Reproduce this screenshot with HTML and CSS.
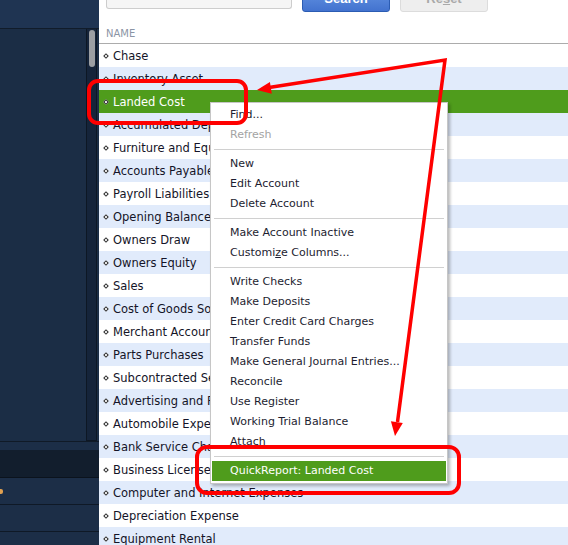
FILE: index.html
```html
<!DOCTYPE html>
<html>
<head>
<meta charset="utf-8">
<link rel="stylesheet" href="styles.css">
</head>
<body>
<div class="page">
  <aside class="side">
    <div class="side-top"></div>
    <div class="side-mid">
      <div class="track"><div class="thumb"></div></div>
    </div>
    <div class="side-band"></div>
    <div class="side-dark"></div>
    <div class="side-row"><span class="tiny-icon"></span></div>
    <div class="side-row"></div>
    <div class="side-row last"></div>
  </aside>
  <main class="main">
    <div class="toolbar">
      <div class="search-box"></div>
      <div class="btn btn-primary">Search</div>
      <div class="btn btn-reset">Re<u>s</u>et</div>
    </div>
    <div class="col-head">NAME</div>
    <div class="list">
      <div class="row"><span class="bullet"></span>Chase</div>
      <div class="row alt"><span class="bullet"></span>Inventory Asset</div>
      <div class="row sel"><span class="bullet"></span>Landed Cost</div>
      <div class="row alt"><span class="bullet"></span>Accumulated Depreciation</div>
      <div class="row"><span class="bullet"></span>Furniture and Equipment</div>
      <div class="row alt"><span class="bullet"></span>Accounts Payable</div>
      <div class="row"><span class="bullet"></span>Payroll Liabilities</div>
      <div class="row alt"><span class="bullet"></span>Opening Balance Equity</div>
      <div class="row"><span class="bullet"></span>Owners Draw</div>
      <div class="row alt"><span class="bullet"></span>Owners Equity</div>
      <div class="row"><span class="bullet"></span>Sales</div>
      <div class="row alt"><span class="bullet"></span>Cost of Goods Sold</div>
      <div class="row"><span class="bullet"></span>Merchant Account Fees</div>
      <div class="row alt"><span class="bullet"></span>Parts Purchases</div>
      <div class="row"><span class="bullet"></span>Subcontracted Services</div>
      <div class="row alt"><span class="bullet"></span>Advertising and Promotion</div>
      <div class="row"><span class="bullet"></span>Automobile Expense</div>
      <div class="row alt"><span class="bullet"></span>Bank Service Charges</div>
      <div class="row"><span class="bullet"></span>Business Licenses and Permits</div>
      <div class="row alt"><span class="bullet"></span>Computer and Internet Expenses</div>
      <div class="row"><span class="bullet"></span>Depreciation Expense</div>
      <div class="row alt"><span class="bullet"></span>Equipment Rental</div>
    </div>
  </main>

  <div class="menu">
    <div class="item">Find...</div>
    <div class="item disabled">Refresh</div>
    <div class="sep"></div>
    <div class="item">New</div>
    <div class="item">Edit Account</div>
    <div class="item">Delete Account</div>
    <div class="sep"></div>
    <div class="item">Make Account Inactive</div>
    <div class="item">Customi<u>z</u>e Columns...</div>
    <div class="sep"></div>
    <div class="item">Write Checks</div>
    <div class="item">Make Deposits</div>
    <div class="item">Enter Credit Card Charges</div>
    <div class="item">Transfer Funds</div>
    <div class="item">Make General Journal Entries...</div>
    <div class="item">Reconcile</div>
    <div class="item">Use Register</div>
    <div class="item">Working Trial Balance</div>
    <div class="item">Attach</div>
    <div class="sep"></div>
    <div class="item hot">QuickReport: Landed Cost</div>
  </div>

  <svg class="marks" width="568" height="545" viewBox="0 0 568 545">
    <rect x="89" y="81" width="157" height="42" rx="9" ry="9" fill="none" stroke="#ff0000" stroke-width="4"/>
    <rect x="197" y="447" width="262" height="46" rx="10" ry="10" fill="none" stroke="#ff0000" stroke-width="4"/>
    <polyline points="269,87.5 445,60 397.5,422" fill="none" stroke="#ff0000" stroke-width="3.5" stroke-linejoin="miter"/>
    <polygon points="257,90 271.8,93.7 269.9,81.9" fill="#ff0000"/>
    <polygon points="395,436 402.8,422.9 390.9,421.3" fill="#ff0000"/>
  </svg>
</div>
</body>
</html>
```
FILE: styles.css
```css
* { box-sizing: border-box; }
html, body { margin: 0; padding: 0; }
body {
  width: 568px;
  height: 545px;
  overflow: hidden;
  background: #fff;
  font-family: "DejaVu Sans", Verdana, sans-serif;
}
.page {
  position: relative;
  width: 568px;
  height: 545px;
  display: flex;
  overflow: hidden;
}

/* left dark panel */
.side {
  width: 99px;
  flex: none;
  display: flex;
  flex-direction: column;
  background: #1c2e47;
}
.side > * { flex: none; }
.side-top {
  height: 29px;
  background: #1f3452;
  border-bottom: 1px solid #111c2a;
}
.side-mid {
  height: 413px;
  display: flex;
  justify-content: flex-end;
  padding-right: 2px;
  background: #1b2d45;
  border-bottom: 1px solid #101a27;
}
.track {
  width: 11px;
  height: 412px;
  background: #15243a;
  border: 1px solid #0d1724;
  border-top: none;
  padding: 1px 0 0 2px;
}
.thumb {
  width: 6px;
  height: 37px;
  border-radius: 3px;
  background: #9c9fa3;
}
.side-band { height: 8px; background: #1c2e47; }
.side-dark {
  height: 28px;
  background: #121e2d;
  border-bottom: 1px solid #0b131d;
}
.side-row {
  position: relative;
  height: 27px;
  background: #1c2e47;
  border-bottom: 1px solid #0f1926;
}
.side-row.last { border-bottom: none; height: 20px; }
.tiny-icon {
  position: absolute;
  left: 0;
  top: 11px;
  width: 3px;
  height: 5px;
  background: #e0a050;
  border-radius: 0 2px 2px 0;
}

/* main area */
.main {
  flex: 1;
  display: flex;
  flex-direction: column;
  background: #fff;
  min-width: 0;
}
.main > * { flex: none; }
.toolbar {
  height: 22px;
  display: flex;
  align-items: flex-start;
  gap: 10px;
  padding-left: 7px;
}
.search-box {
  width: 186px;
  height: 9px;
  background: #f5f5f5;
  border: 1px solid #cdcdcd;
  border-top: none;
  border-radius: 0 0 3px 3px;
}
.btn {
  width: 88px;
  height: 28px;
  margin-top: -16px;
  border-radius: 3px;
  font-family: "Liberation Sans", Arial, sans-serif;
  font-weight: bold;
  font-size: 13px;
  display: flex;
  align-items: center;
  justify-content: center;
}
.btn u { text-decoration: underline; }
.btn-primary {
  background: linear-gradient(#6a9ae6, #4373cf);
  border: 1px solid #2b5cb3;
  color: #fff;
}
.btn-reset {
  background: #eeeeee;
  border: 1px solid #dcdcdc;
  color: #a9a9a9;
}
.col-head {
  height: 22px;
  padding: 6px 0 0 7px;
  font-size: 10px;
  color: #8b95a5;
  border-bottom: 1px solid #acacac;
}

.list { display: flex; flex-direction: column; }
.row {
  flex: none;
  height: 23px;
  display: flex;
  align-items: center;
  padding-left: 4px;
  font-size: 11.5px;
  color: #141428;
  white-space: nowrap;
  overflow: hidden;
  background: #fff;
}
.row.alt { background: #e1ebfb; }
.row.sel { background: #4f9c1c; color: #fff; }
.bullet {
  width: 4px;
  height: 4px;
  margin: 0 5px 0 1px;
  transform: rotate(45deg);
  border: 1px solid #2a2a2a;
  background: #fff;
  flex: none;
}

/* context menu */
.menu {
  position: absolute;
  left: 210px;
  top: 102px;
  width: 238px;
  background: #fff;
  border: 1px solid #c6c6c6;
  box-shadow: 2px 2px 3px rgba(0, 0, 0, 0.28);
  padding: 2px 1px;
  font-size: 11px;
  color: #1d1d30;
  z-index: 2;
}
.item {
  height: 20px;
  line-height: 20px;
  padding-left: 18px;
  white-space: nowrap;
}
.item u { text-decoration: underline; }
.item.disabled { color: #a3a3a3; }
.item.hot { background: #4f9c1c; color: #fff; }
.sep {
  height: 9px;
  display: flex;
  align-items: center;
  padding: 0 2px;
}
.sep::before {
  content: "";
  flex: 1;
  height: 1px;
  background: #d0d0d0;
}

.marks {
  position: absolute;
  left: 0;
  top: 0;
  z-index: 3;
  pointer-events: none;
}
```
